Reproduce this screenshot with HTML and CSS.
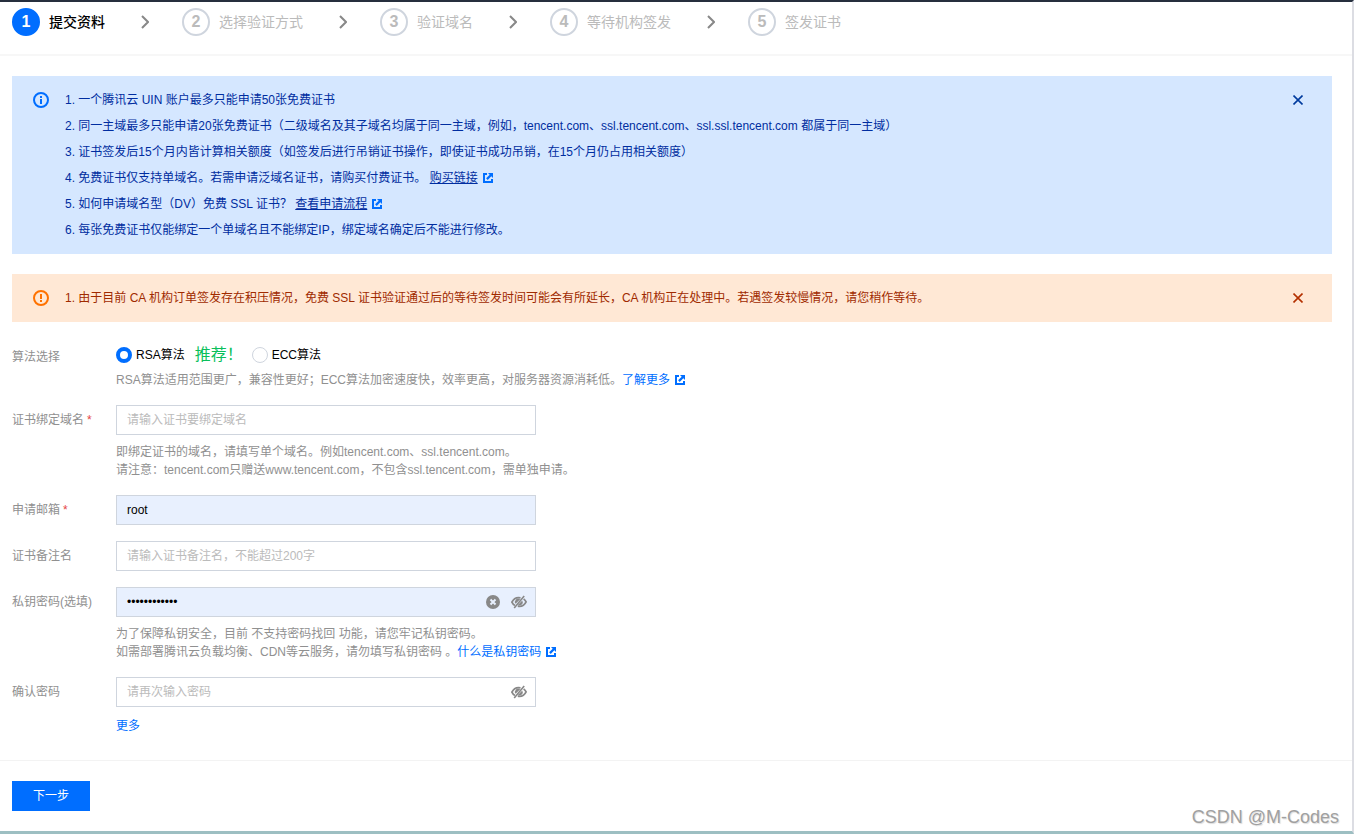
FILE: index.html
```html
<!DOCTYPE html>
<html lang="zh-CN">
<head>
<meta charset="utf-8">
<title>提交资料</title>
<link rel="stylesheet" href="styles.css">
</head>
<body>
<svg class="symbols" aria-hidden="true">
  <symbol id="chevron" viewBox="0 0 8 14"><path d="M1 1l6 6-6 6" fill="none" stroke="currentColor" stroke-width="2"/></symbol>
  <symbol id="external" viewBox="0 0 10 10"><path d="M4 1H1v8h8V6" fill="none" stroke="currentColor" stroke-width="2"/><path d="M5 0h5v5L8.300 3.300 4.700 6.900 3.100 5.300 6.700 1.700z" fill="currentColor"/></symbol>
  <symbol id="close" viewBox="0 0 10 10"><path d="M.5.5l9 9M9.500.5l-9 9" fill="none" stroke="currentColor" stroke-width="1.600"/></symbol>
  <symbol id="eye-off" viewBox="0 0 16 14"><path d="M9.500 2.800C5.500 2 2.500 3.900.9 7.200c.7 1.500 1.700 2.600 3 3.300M12.600 3.900c1.100.7 1.900 1.700 2.500 3-1.600 3.200-4.500 5-8.300 4.300" fill="none" stroke="currentColor" stroke-width="1.800"/><path d="M4.600 8.800a3.300 3.300 0 0 1 4.600-4.600zM11.300 5.500a3.300 3.300 0 0 1-4.500 4.500z" fill="currentColor"/><path d="M13.200 1L3.200 13" stroke="currentColor" stroke-width="1.600"/></symbol>
</svg>
<div class="page">
  <ol class="steps">
    <li class="step step-current"><span class="step-num">1</span><span>提交资料</span></li>
    <li class="step"><svg class="chevron"><use href="#chevron"/></svg><span class="step-num">2</span><span>选择验证方式</span></li>
    <li class="step"><svg class="chevron"><use href="#chevron"/></svg><span class="step-num">3</span><span>验证域名</span></li>
    <li class="step"><svg class="chevron"><use href="#chevron"/></svg><span class="step-num">4</span><span>等待机构签发</span></li>
    <li class="step"><svg class="chevron"><use href="#chevron"/></svg><span class="step-num">5</span><span>签发证书</span></li>
  </ol>

  <main class="content">
    <section class="alert alert-info">
      <svg class="alert-icon" viewBox="0 0 16 16"><circle cx="8" cy="8" r="7" fill="none" stroke="currentColor" stroke-width="2"/><path d="M7 4h2v2H7zM7 7h2v5H7z" fill="currentColor"/></svg>
      <div class="alert-body">
        <p>1. 一个腾讯云 UIN 账户最多只能申请50张免费证书</p>
        <p>2. 同一主域最多只能申请20张免费证书（二级域名及其子域名均属于同一主域，例如，tencent.com、ssl.tencent.com、ssl.ssl.tencent.com 都属于同一主域）</p>
        <p>3. 证书签发后15个月内皆计算相关额度（如签发后进行吊销证书操作，即使证书成功吊销，在15个月仍占用相关额度）</p>
        <p>4. 免费证书仅支持单域名。若需申请泛域名证书，请购买付费证书。 <a class="alert-link" href="#">购买链接</a><svg class="external"><use href="#external"/></svg></p>
        <p>5. 如何申请域名型（DV）免费 SSL 证书？ <a class="alert-link" href="#">查看申请流程</a><svg class="external"><use href="#external"/></svg></p>
        <p>6. 每张免费证书仅能绑定一个单域名且不能绑定IP，绑定域名确定后不能进行修改。</p>
      </div>
      <button class="icon-button" type="button" aria-label="关闭"><svg class="close"><use href="#close"/></svg></button>
    </section>

    <section class="alert alert-warning">
      <svg class="alert-icon" viewBox="0 0 16 16"><circle cx="8" cy="8" r="7" fill="none" stroke="currentColor" stroke-width="2"/><path d="M7 4h2v5H7zM7 10h2v2H7z" fill="currentColor"/></svg>
      <div class="alert-body">
        <p>1. 由于目前 CA 机构订单签发存在积压情况，免费 SSL 证书验证通过后的等待签发时间可能会有所延长，CA 机构正在处理中。若遇签发较慢情况，请您稍作等待。</p>
      </div>
      <button class="icon-button" type="button" aria-label="关闭"><svg class="close"><use href="#close"/></svg></button>
    </section>

    <form class="form" id="apply">
      <div class="row">
        <span class="label" id="algo">算法选择</span>
        <div class="control">
          <div class="radios" role="radiogroup" aria-labelledby="algo">
            <label class="radio"><input type="radio" name="algo" checked>RSA算法</label>
            <span class="recommend">推荐！</span>
            <label class="radio"><input type="radio" name="algo">ECC算法</label>
          </div>
          <p class="help help-tight">RSA算法适用范围更广，兼容性更好；ECC算法加密速度快，效率更高，对服务器资源消耗低。<a class="link" href="#">了解更多<svg class="external"><use href="#external"/></svg></a></p>
        </div>
      </div>
      <div class="row">
        <label class="label" for="domain">证书绑定域名<span class="required">*</span></label>
        <div class="control">
          <div class="field"><input id="domain" type="text" placeholder="请输入证书要绑定域名"></div>
          <p class="help">即绑定证书的域名，请填写单个域名。例如tencent.com、ssl.tencent.com。<br>请注意：tencent.com只赠送www.tencent.com，不包含ssl.tencent.com，需单独申请。</p>
        </div>
      </div>
      <div class="row">
        <label class="label" for="email">申请邮箱<span class="required">*</span></label>
        <div class="control"><div class="field field-filled"><input id="email" type="text" value="root"></div></div>
      </div>
      <div class="row">
        <label class="label" for="remark">证书备注名</label>
        <div class="control"><div class="field"><input id="remark" type="text" placeholder="请输入证书备注名，不能超过200字"></div></div>
      </div>
      <div class="row">
        <label class="label" for="password">私钥密码(选填)</label>
        <div class="control">
          <div class="field field-filled">
            <input id="password" type="password" value="rootpassword">
            <button class="icon-button" type="button" aria-label="清除"><svg class="clear" viewBox="0 0 14 14"><circle cx="7" cy="7" r="7" fill="currentColor"/><path d="M4.500 4.500l5 5M9.500 4.500l-5 5" stroke="#e8f0fe" stroke-width="2"/></svg></button>
            <button class="icon-button" type="button" aria-label="显示密码"><svg class="eye"><use href="#eye-off"/></svg></button>
          </div>
          <p class="help">为了保障私钥安全，目前 不支持密码找回 功能，请您牢记私钥密码。<br>如需部署腾讯云负载均衡、CDN等云服务，请勿填写私钥密码 。<a class="link" href="#">什么是私钥密码<svg class="external"><use href="#external"/></svg></a></p>
        </div>
      </div>
      <div class="row">
        <label class="label" for="confirm">确认密码</label>
        <div class="control">
          <div class="field">
            <input id="confirm" type="password" placeholder="请再次输入密码">
            <button class="icon-button" type="button" aria-label="显示密码"><svg class="eye"><use href="#eye-off"/></svg></button>
          </div>
          <p class="more"><a class="link" href="#">更多</a></p>
        </div>
      </div>
    </form>
  </main>

  <footer class="footer"><button class="submit" type="submit" form="apply">下一步</button></footer>
  <div class="watermark">CSDN @M-Codes</div>
</div>
</body>
</html>
```
FILE: styles.css
```css
* { box-sizing: border-box; }

body {
  margin: 0;
  background: #fff;
  color: #000;
  font: 12px/18px "Liberation Sans", Arial, "Noto Sans CJK SC", sans-serif;
  text-spacing-trim: space-all;
}

p, ol { margin: 0; padding: 0; }
button, input { font: inherit; }
svg { flex: none; }
.symbols { display: none; }

.page {
  position: relative;
  display: flex;
  flex-direction: column;
  min-height: 100vh;
  border-top: 2px solid #262f3e;
  border-right: 2px solid #dcdde3;
  border-bottom: 3px solid #9dbfc2;
}

.steps {
  display: flex;
  padding: 6px 12px 18px;
  border-bottom: 2px solid #f7f7f7;
  list-style: none;
  font-size: 14px;
}
.step { display: flex; align-items: center; color: #bbb; }
.step-current { color: #000; font-weight: 500; }
.step-num {
  display: flex;
  align-items: center;
  justify-content: center;
  width: 28px;
  height: 28px;
  margin-right: 9px;
  border: 2px solid #cfd5de;
  border-radius: 50%;
  font-size: 16px;
  font-weight: 700;
}
.step-current .step-num { border-color: #006eff; background: #006eff; color: #fff; }
.chevron { width: 8px; height: 14px; margin: 0 33px 0 36px; color: #888; }

.content { padding: 20px 20px 25px 12px; }

.alert {
  display: flex;
  align-items: flex-start;
  margin-bottom: 20px;
  padding: 15px 28px 15px 21px;
}
.alert-info { background: #d5e7ff; color: #003b9e; }
.alert-info p { color: #002da0; }
.alert-info .alert-icon, .alert-info .external { color: #006eff; }
.alert-warning { background: #ffe8d5; color: #b43000; }
.alert-warning p { color: #a02a00; }
.alert-warning .alert-icon { color: #ff7200; }
.alert-icon { width: 16px; height: 16px; margin: 1px 16px 0 0; }
.alert-body { display: flex; flex: 1; flex-direction: column; gap: 8px; }
.alert-link { color: inherit; text-decoration: underline; }

.icon-button {
  display: flex;
  align-items: center;
  justify-content: center;
  height: 18px;
  padding: 0;
  border: 0;
  background: none;
  color: inherit;
}
.close { width: 10px; height: 10px; margin-right: 1px; }
.external { width: 10px; height: 10px; margin-left: 5px; vertical-align: -1px; }

.form { display: flex; flex-direction: column; gap: 16px; }
.row { display: flex; align-items: flex-start; }
.label { flex: none; width: 104px; padding: 6px 0; color: #909090; }
.required { margin-left: 3px; color: #e54545; }
.control { flex: 1; }

.radios { display: flex; align-items: center; height: 25px; }
.radio { display: flex; align-items: center; gap: 4px; }
.radio input {
  appearance: none;
  width: 16px;
  height: 16px;
  margin: 0;
  border: 1px solid #cfd5de;
  border-radius: 50%;
  background: #fff;
}
.radio input:checked { border: 4px solid #006eff; }
.recommend { margin: 0 9px 0 10px; color: #0abf5b; font-size: 16px; }

.field {
  display: flex;
  align-items: center;
  gap: 11px;
  width: 420px;
  max-width: 100%;
  height: 30px;
  padding: 0 8px 0 10px;
  border: 1px solid #cfd5de;
  color: #888;
}
.field input {
  flex: 1;
  min-width: 0;
  height: 28px;
  padding: 0;
  border: 0;
  outline: 0;
  background: none;
  color: #000;
}
.field input::placeholder { color: #bbb; }
.field-filled { background: #e8f0fe; }
.clear { width: 14px; height: 14px; }
.eye { width: 16px; height: 14px; }

.help { margin-top: 8px; color: #909090; }
.help-tight { margin-top: 4px; }
.more { margin-top: 10px; }
.link { color: #006eff; text-decoration: none; }

.footer { padding: 20px 12px; border-top: 1px solid #f3f3f3; }
.submit {
  height: 30px;
  padding: 0 21px;
  border: 0;
  background: #006eff;
  color: #fff;
}

.watermark {
  position: absolute;
  right: 13px;
  bottom: 3px;
  color: #a0a0a0;
  font-size: 18px;
  line-height: 22px;
  text-shadow: 1px 1px 1px #ddd;
}
```
